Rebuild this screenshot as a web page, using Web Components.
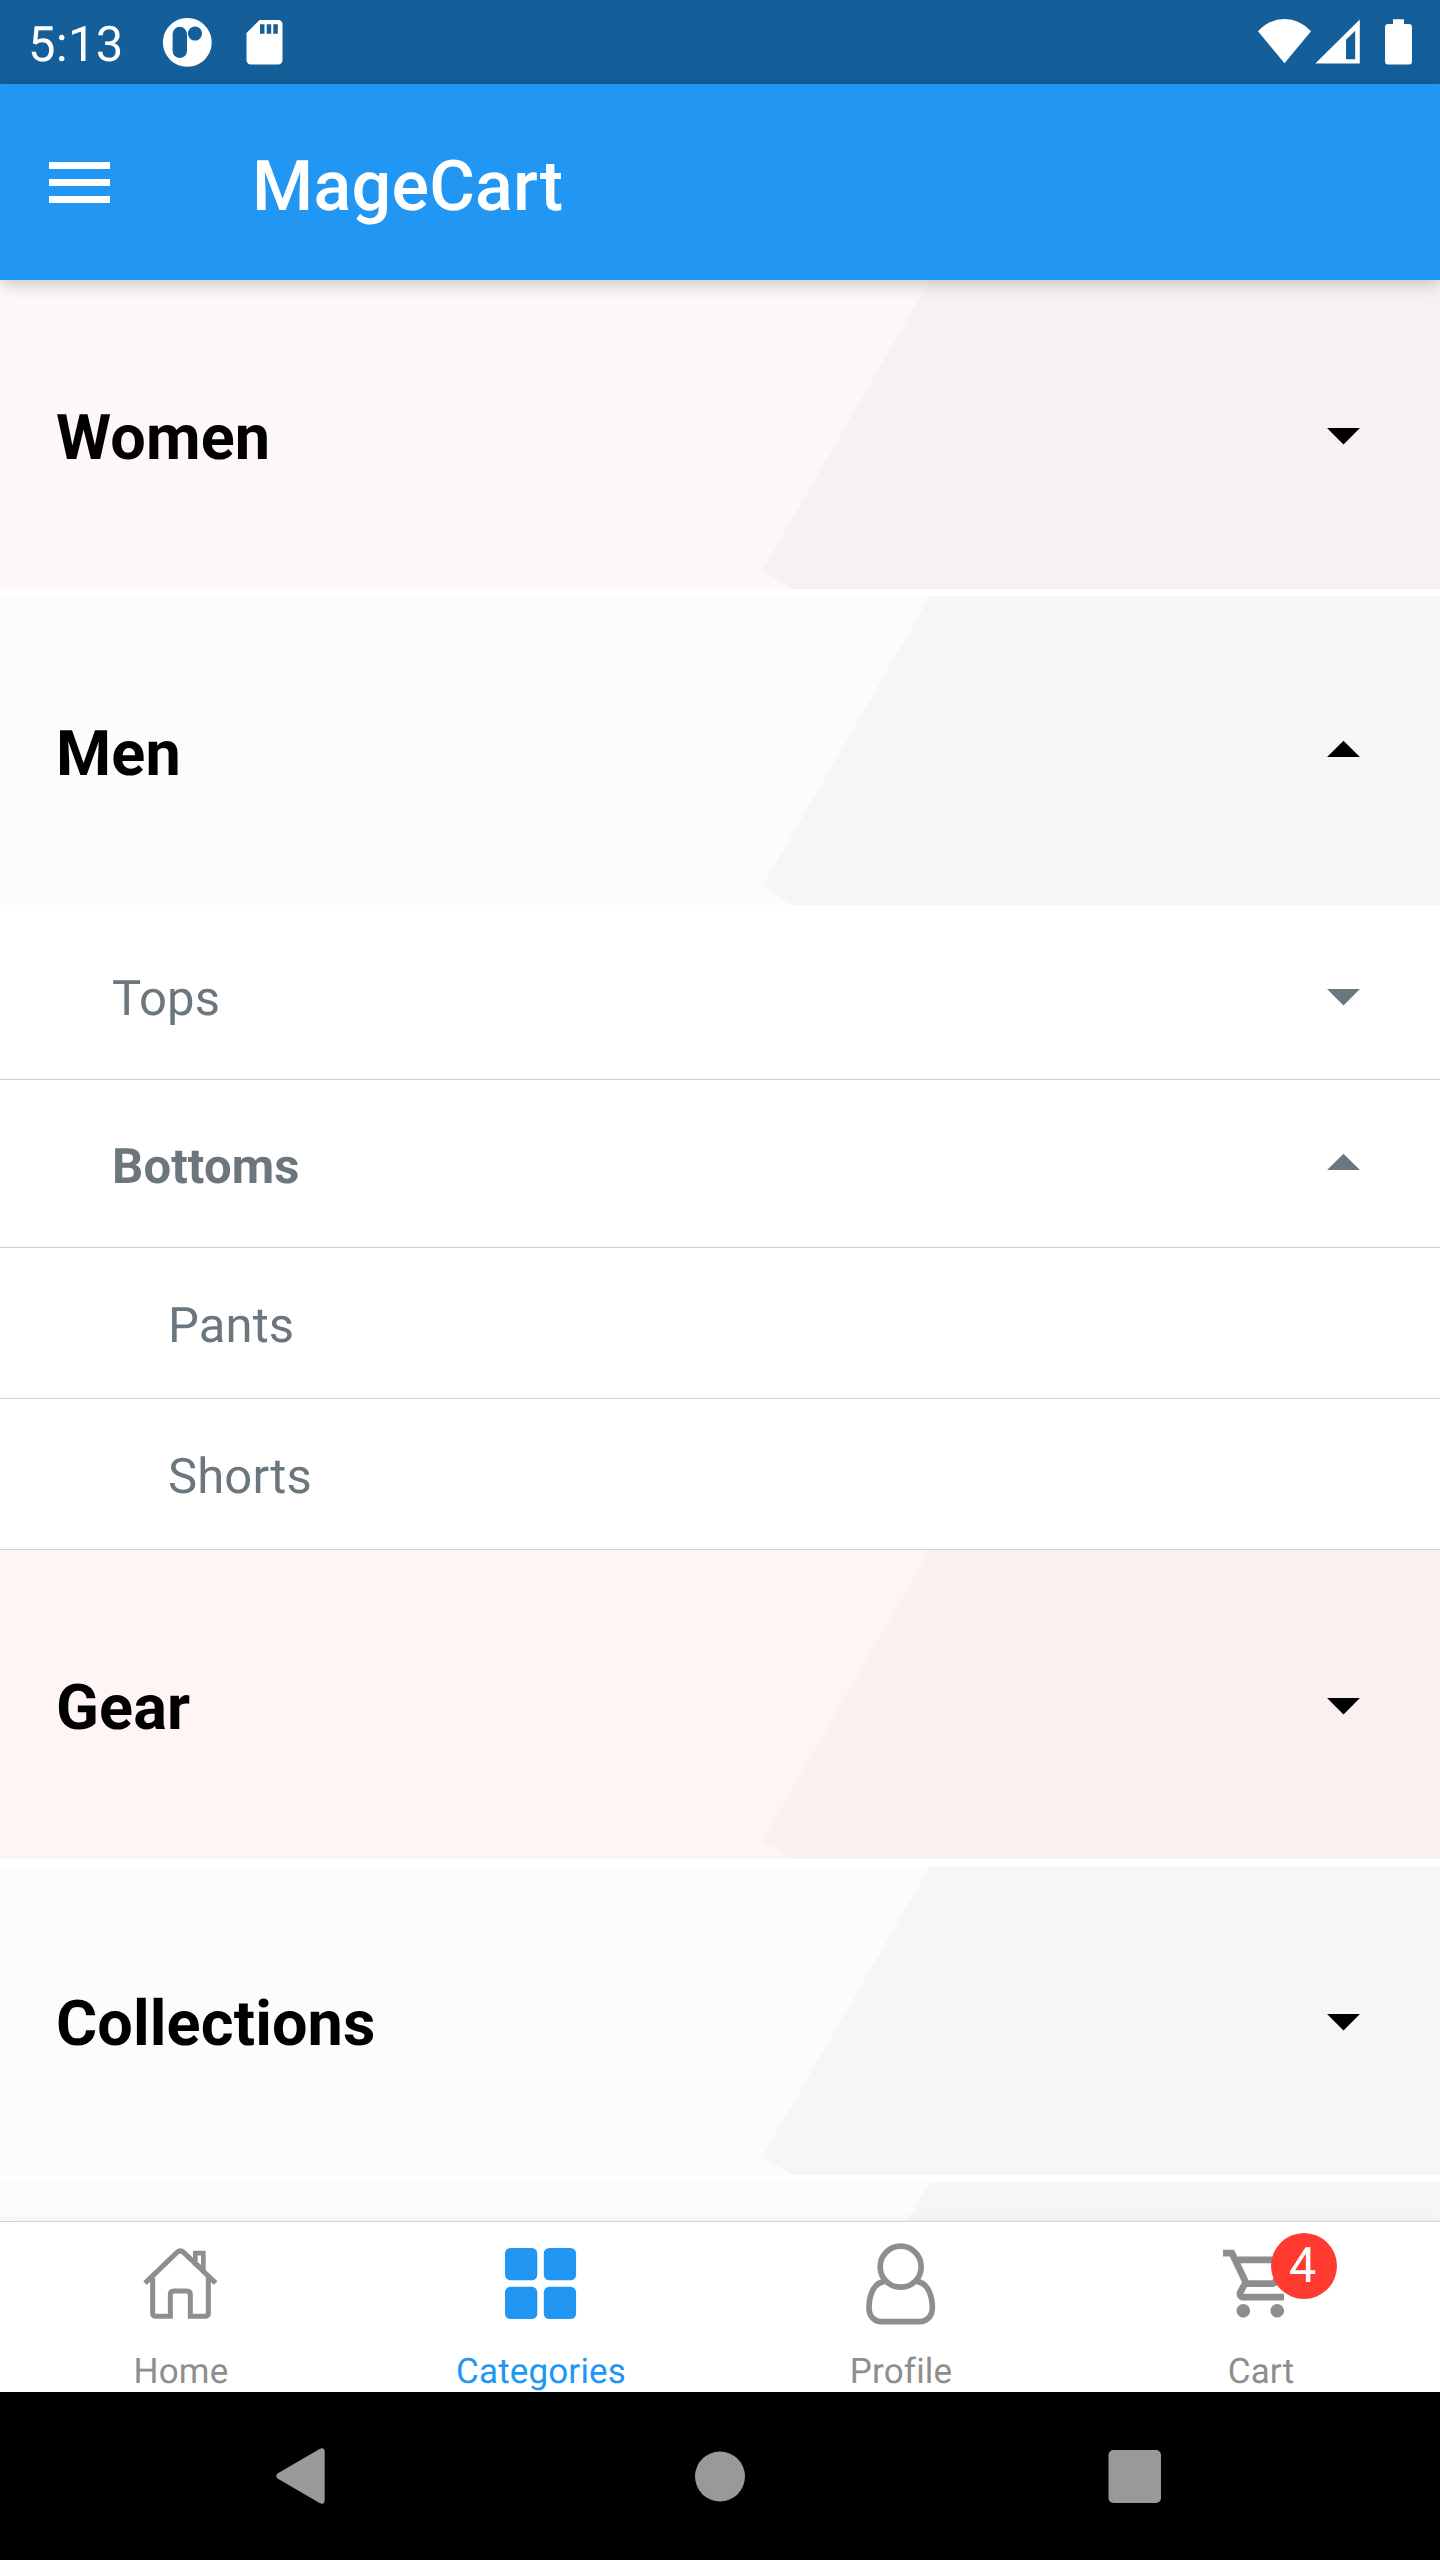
<!DOCTYPE html>
<html lang="en">
<head>
<meta charset="utf-8">
<title>MageCart</title>
<style>
  html, body { margin: 0; padding: 0; background: #fff; }
  body { width: 1440px; height: 2560px; overflow: hidden; font-family: Roboto, "Noto Sans", sans-serif; text-rendering: geometricPrecision; }
</style>
</head>
<body>
<mage-app></mage-app>
<script>
const define = (name, html, setup) => {
  const template = document.createElement('template');
  template.innerHTML = html;
  customElements.define(name, class extends HTMLElement {
    connectedCallback() {
      if (this.shadowRoot) return;
      this.attachShadow({ mode: 'open' }).append(template.content.cloneNode(true));
      if (setup) setup(this, this.shadowRoot);
    }
  });
};

define('status-bar', `
<style>
  :host { display: flex; height: 84px; flex: none; background: #145f9a; color: #fff; }
  .time { flex: none; width: 133px; box-sizing: border-box; padding-left: 28px; font-size: 49px; line-height: 89px; letter-spacing: .3px; white-space: nowrap; }
  svg { display: block; flex: none; fill: #fff; }
  .gap { flex: 1; }
</style>
<div class="time">5:13</div>
<svg width="177" height="84" viewBox="133 0 177 84">
  <path fill-rule="evenodd" d="M187.3 18a24.4 24.4 0 1 0 .01 0zM179.8 26.8a7.2 7.2 0 0 1 7.2 7.2v16.800a7.200 7.200 0 0 1-14.400 0V34a7.200 7.200 0 0 1 7.200-7.200zM195 26.600a7 7 0 1 1-.01 0z"/>
  <path fill-rule="evenodd" d="M259.500 20H278.300a4.200 4.200 0 0 1 4.200 4.200V60.300a4.200 4.200 0 0 1-4.200 4.200H250.700a4.200 4.200 0 0 1-4.200-4.200V33zM260 24.300v9.400h4.500v-9.400zM266.700 24.300v9.400h4.500v-9.400zM273.300 24.300v9.400h4.500v-9.400z"/>
</svg>
<div class="gap"></div>
<svg width="190" height="84" viewBox="1250 0 190 84">
  <path d="M1284.500 63.300L1258 31.300Q1269.500 19 1284.500 19T1311 31.300z"/>
  <path fill-rule="evenodd" d="M1315.300 63.600L1359.800 19.500V63.600zM1346 39.800V59.300H1355.200V30.700z"/>
  <path d="M1393 19.300h11V24h4.800a3.200 3.200 0 0 1 3.200 3.200V61.300a3.200 3.200 0 0 1-3.200 3.200h-20.600a3.200 3.200 0 0 1-3.200-3.200V27.200a3.200 3.200 0 0 1 3.200-3.200h4.800z"/>
</svg>`);

define('app-header', `
<style>
  :host { display: flex; align-items: center; flex: none; height: 196px; box-sizing: border-box; padding-left: 49px; background: #2196f3; color: #fff;
    position: relative; z-index: 2; box-shadow: 0 4px 16px rgba(0,0,0,.2); }
  svg { display: block; flex: none; margin-right: 142px; }
  h1 { margin: 0; padding-top: 10px; font-size: 70px; font-weight: 500; line-height: 90px; letter-spacing: .25px; }
</style>
<svg width="61" height="41" viewBox="0 0 61 41" fill="#fff"><path d="M0 0h61v7H0zM0 17h61v7H0zM0 34h61v7H0z"/></svg>
<h1><slot></slot></h1>`);

define('drop-arrow', `
<style>
  :host { display: block; flex: none; width: 79px; height: 79px; }
  svg { display: block; fill: currentColor; }
  .up { display: none; }
  :host([up]) .up { display: inline; }
  :host([up]) .down { display: none; }
</style>
<svg width="79" height="79" viewBox="0 0 24 24"><path class="down" d="M7 10l5 5 5-5z"/><path class="up" d="M7 14l5-5 5 5z"/></svg>`);

define('category-banner', `
<style>
  :host { display: flex; align-items: center; justify-content: space-between; flex: none; box-sizing: border-box; height: 309px;
    padding: 0 57px 0 56px; color: #000; font-size: 63px; font-weight: 700; background: var(--tint); position: relative; }
  .shape { position: absolute; inset: 0; background: var(--shade); clip-path: polygon(930px 0, 1440px 0, 1440px 309px, 793.500px 309px, 762px 291px); }
  .label { position: relative; padding-top: 8px; line-height: 80px; white-space: nowrap; letter-spacing: .12px; }
  drop-arrow { position: relative; }
</style>
<div class="shape"></div>
<div class="label"><slot></slot></div>
<drop-arrow></drop-arrow>`,
(el, root) => root.querySelector('drop-arrow').toggleAttribute('up', el.hasAttribute('open')));

define('category-row', `
<style>
  :host { display: flex; align-items: center; justify-content: space-between; flex: none; box-sizing: border-box; height: 168px;
    padding: 0 57px 0 112px; border-bottom: 1px solid #ced0d4; color: #6c777d; font-size: 49px; background: #fff; }
  :host([leaf]) { height: 151px; padding-left: 168px; }
  :host([open]) { font-weight: 700; }
  :host([first]) { margin-top: 7px; }
  .label { padding-top: 6px; line-height: 64px; white-space: nowrap; letter-spacing: .12px; }
</style>
<div class="label"><slot></slot></div>
<slot name="arrow"></slot>`);

define('tab-item', `
<style>
  :host { display: flex; flex-direction: column; align-items: center; flex: 1 1 0; color: #8e8e8f; position: relative; }
  :host([active]) { color: #2196f3; }
  .icon { display: block; width: 120px; height: 110px; margin-top: 8px; }
  .label { font-size: 35px; line-height: 44px; margin-top: 10px; padding-left: 2px; letter-spacing: .15px; white-space: nowrap; }
</style>
<div class="icon"><slot name="icon"></slot></div>
<div class="label"><slot></slot></div>
<slot name="badge"></slot>`);

define('count-badge', `
<style>
  :host { position: absolute; left: 190.500px; top: 11px; width: 66px; height: 66px; border-radius: 50%; background: #ff3b30; color: #fff;
    font-size: 49px; line-height: 65px; text-align: center; text-indent: -2px; }
</style><slot></slot>`);

define('tab-bar', `
<style>
  :host { display: flex; flex: none; box-sizing: border-box; height: 171px; background: #fff; border-top: 1px solid #d4d4d5;
    position: relative; z-index: 2; box-shadow: 0 -1px 10px rgba(0,0,0,.06); }
  svg { display: block; }
</style>
<tab-item>
  <svg slot="icon" width="120" height="110" viewBox="0 0 360 330" fill="none" stroke="currentColor" stroke-width="15">
    <path d="M75 159.500L171 67Q181 58 191 67L287 159.500M98 144V249q0 10 10 10H151V194q0-11 11-11H200q11 0 11 11V259H255q10 0 10-10V144"/>
    <path stroke-width="14" d="M226 108V69.500H250V128M232 104l12 12"/>
  </svg>Home
</tab-item>
<tab-item active>
  <svg slot="icon" width="120" height="110" viewBox="0 0 120 110" fill="currentColor">
    <rect x="25" y="18" width="32.300" height="32.300" rx="5.500"/><rect x="63.800" y="18" width="32.300" height="32.300" rx="5.500"/>
    <rect x="25" y="56.800" width="32.300" height="32.300" rx="5.500"/><rect x="63.800" y="56.800" width="32.300" height="32.300" rx="5.500"/>
  </svg>Categories
</tab-item>
<tab-item>
  <svg slot="icon" width="120" height="110" viewBox="0 0 360 330" fill="none" stroke="currentColor" stroke-width="17">
    <circle cx="182" cy="110" r="61.500"/>
    <path d="M134 154C99 158 87 200 87 233C87 260 105 275 123 275H240C258 275 277 260 277 233C277 200 265 158 230 154"/>
  </svg>Profile
</tab-item>
<tab-item>
  <svg slot="icon" width="120" height="110" viewBox="0 0 120 110" fill="currentColor">
    <path transform="translate(19.600 12.900) scale(3.390)" d="M15.550 13c.75 0 1.410-.41 1.750-1.030l3.580-6.490A.996.996 0 0 0 20.010 4H5.210l-.94-2H1v2h2l3.600 7.590-1.350 2.440C4.520 15.370 5.480 17 7 17h12v-2H7l1.100-2h7.450zM6.160 6h12.150l-2.760 5H8.530L6.160 6zM7 18c-1.100 0-1.990.9-1.990 2S5.900 22 7 22s2-.9 2-2-.9-2-2-2zm10 0c-1.100 0-1.990.9-1.990 2s.89 2 1.990 2 2-.9 2-2-.9-2-2-2z"/>
  </svg>Cart
  <count-badge slot="badge">4</count-badge>
</tab-item>`);

define('system-nav', `
<style>
  :host { display: flex; align-items: center; justify-content: space-between; flex: none; height: 168px; box-sizing: border-box; padding: 0 279px 0 276px; background: #000; position: relative; z-index: 3; }
  svg { display: block; fill: #999; }
  .home { margin-left: 7px; }
</style>
<svg width="49" height="56" viewBox="0 0 49 56"><path d="M1.500 25.500L44 .8Q48.700-1 48.700 4V52Q48.700 57 44 55.200L1.500 30.500Q-1 28 1.500 25.500z"/></svg>
<svg class="home" width="51" height="51" viewBox="0 0 51 51"><circle cx="25" cy="25.500" r="25"/></svg>
<svg width="53" height="53" viewBox="0 0 53 53"><rect x=".5" width="52.500" height="53" rx="5"/></svg>`);

define('mage-app', `
<style>
  :host { display: flex; flex-direction: column; width: 1440px; height: 2560px; overflow: hidden; background: #fff; }
  main { display: flex; flex-direction: column; flex: 1 1 0; min-height: 0; overflow: hidden; }
  .spaced { margin-bottom: 7px; }
</style>
<status-bar></status-bar>
<app-header>MageCart</app-header>
<main>
  <category-banner class="spaced" style="--tint:#fdf7f7;--shade:#f7f1f1">Women</category-banner>
  <category-banner open style="--tint:#fcfcfc;--shade:#f6f6f6">Men</category-banner>
  <category-row first>Tops<drop-arrow slot="arrow"></drop-arrow></category-row>
  <category-row open>Bottoms<drop-arrow slot="arrow" up></drop-arrow></category-row>
  <category-row leaf>Pants</category-row>
  <category-row leaf>Shorts</category-row>
  <category-banner class="spaced" style="--tint:#fff5f4;--shade:#faf0ef">Gear</category-banner>
  <category-banner class="spaced" style="--tint:#fcfcfe;--shade:#f6f6f8">Collections</category-banner>
  <category-banner style="--tint:#fcfcfe;--shade:#f6f6f8"></category-banner>
</main>
<tab-bar></tab-bar>
<system-nav></system-nav>`);
</script>
</body>
</html>
